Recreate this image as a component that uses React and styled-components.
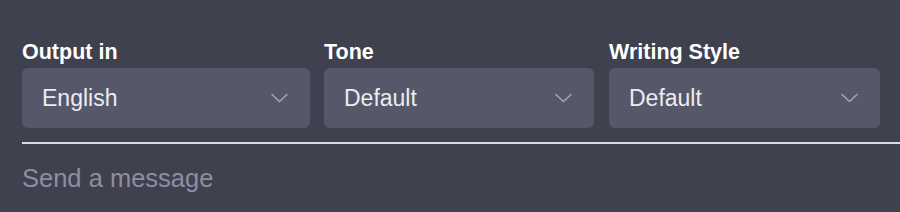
import React from 'react';
import styled, { createGlobalStyle } from 'styled-components';

const GlobalStyle = createGlobalStyle`
  html, body {
    margin: 0;
    padding: 0;
    background: #40414f;
  }
  body {
    font-family: "Liberation Sans", Arial, sans-serif;
  }
`;

const Page = styled.div`
  height: 212px;
  background: #40414f;
  padding: 40px 0 0 22px;
  box-sizing: border-box;
  overflow: hidden;
`;

const Options = styled.div`
  display: flex;
  padding-right: 20px;
`;

const Field = styled.div`
  display: flex;
  flex-direction: column;
  width: ${(p) => p.width}px;
  margin-right: ${(p) => p.gap || 0}px;
`;

const Label = styled.div`
  font-size: 21.5px;
  line-height: 24px;
  font-weight: 700;
  color: #ffffff;
  margin-bottom: 4px;
`;

const Select = styled.div`
  height: 60px;
  box-sizing: border-box;
  background: #565869;
  border-radius: 6px;
  display: flex;
  align-items: center;
  justify-content: space-between;
  padding: 0 22px 0 20px;
  color: #ececf1;
  font-size: 23px;
`;

const Divider = styled.div`
  height: 2px;
  background: #dcdce4;
  margin-top: 14px;
`;

const Placeholder = styled.div`
  margin-top: 19px;
  font-size: 25.5px;
  line-height: 30px;
  color: #8e8ea0;
`;

const Chevron = () => (
  <svg width="17" height="10" viewBox="0 0 17 10" fill="none">
    <polyline points="1,1.5 8.5,8.5 16,1.5" stroke="#a4a4b4" strokeWidth="1.6" strokeLinecap="round" strokeLinejoin="round" />
  </svg>
);

const fields = [
  { label: 'Output in', value: 'English', width: 288, gap: 14 },
  { label: 'Tone', value: 'Default', width: 270, gap: 15 },
  { label: 'Writing Style', value: 'Default', width: 271 },
];

export default function App() {
  return (
    <>
      <GlobalStyle />
      <Page>
        <Options>
          {fields.map((f) => (
            <Field key={f.label} width={f.width} gap={f.gap}>
              <Label>{f.label}</Label>
              <Select>
                <span>{f.value}</span>
                <Chevron />
              </Select>
            </Field>
          ))}
        </Options>
        <Divider />
        <Placeholder>Send a message</Placeholder>
      </Page>
    </>
  );
}
